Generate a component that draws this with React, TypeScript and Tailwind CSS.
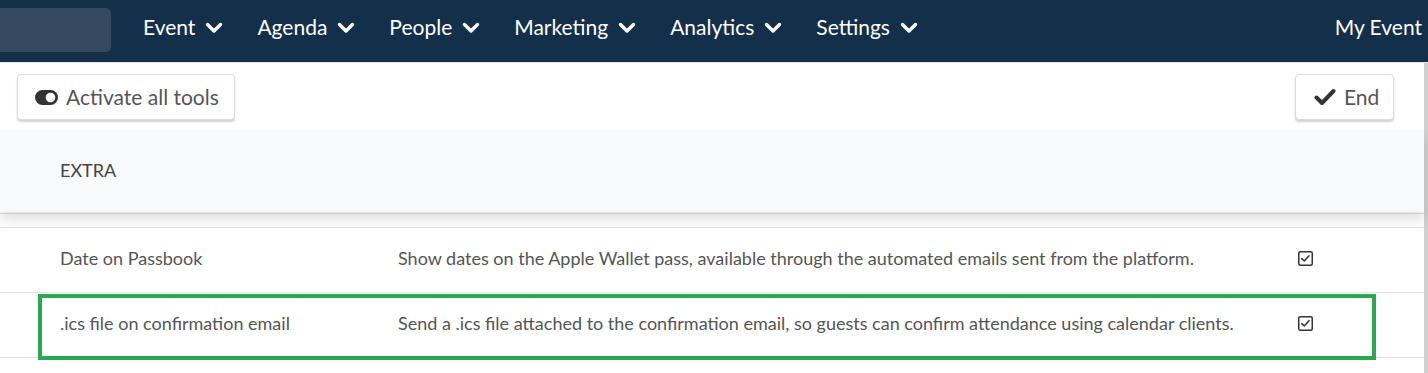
import React from "react";

const Chevron = () => (
  <svg width="18" height="12" viewBox="0 0 18 12" className="ml-[10px] mt-[1px]">
    <path d="M2.5 2.5 L9 9 L15.5 2.5" fill="none" stroke="white" strokeWidth="3.4" strokeLinecap="round" strokeLinejoin="round" />
  </svg>
);

const CheckBox = () => (
  <svg width="15" height="15" viewBox="0 0 15 15">
    <rect x="0.75" y="0.75" width="13.5" height="13.5" rx="1.5" fill="white" stroke="#333" strokeWidth="1.5" />
    <path d="M3.8 7.6 L6.3 10 L11 4.8" fill="none" stroke="#333" strokeWidth="1.6" strokeLinecap="round" strokeLinejoin="round" />
  </svg>
);

const navItems = ["Event", "Agenda", "People", "Marketing", "Analytics", "Settings"];

export default function App() {
  return (
    <div className="w-[1428px] h-[373px] overflow-hidden bg-white relative" style={{ fontFamily: "Lato, 'Open Sans', sans-serif" }}>
      {/* Nav */}
      <div className="h-[62px] bg-[#132f49] flex items-center">
        <div className="w-[111px] h-[44px] bg-[#34495f] rounded-r-[5px] mt-[-3px]" />
        <div className="flex items-center gap-[34px] ml-[32px] mt-[-8px]">
          {navItems.map((n) => (
            <div key={n} className="flex items-center text-white text-[21px]">
              <span>{n}</span>
              <Chevron />
            </div>
          ))}
        </div>
        <div className="ml-auto mr-[6px] mt-[-8px] text-white text-[21px]">My Event</div>
      </div>
      <div className="h-[1px] bg-[#e3e8ee]" />

      <div className="flex">
        <div className="flex-1">
          {/* Toolbar */}
          <div className="h-[67px] flex items-start justify-between pl-[17px] pr-[30px] pt-[11px]">
            <button className="h-[46px] w-[218px] pl-[17px] flex items-center gap-[8px] rounded-[4px] border border-[#dcdcdc] bg-white shadow-[0_2px_2px_rgba(0,0,0,0.18)] text-[#555] text-[21px]">
              <svg width="23" height="15" viewBox="0 0 23 15">
                <rect x="0" y="0" width="23" height="15" rx="7.5" fill="#333" />
                <circle cx="15.5" cy="7.5" r="4.8" fill="white" />
              </svg>
              <span>Activate all tools</span>
            </button>
            <button className="h-[46px] w-[99px] pl-[18px] flex items-center gap-[8px] rounded-[4px] border border-[#dcdcdc] bg-white shadow-[0_2px_2px_rgba(0,0,0,0.18)] text-[#555] text-[21px]">
              <svg width="22" height="18" viewBox="0 0 22 18">
                <path d="M2.5 9.5 L8 15 L19.5 3" fill="none" stroke="#333" strokeWidth="4" strokeLinecap="round" strokeLinejoin="round" />
              </svg>
              <span>End</span>
            </button>
          </div>

          {/* Section header */}
          <div className="h-[82px] bg-[#f8f9fb] flex items-center pl-[60px] pb-[2px] text-[18px] text-[#444] shadow-[0_8px_12px_rgba(0,0,0,0.12)] relative z-10">
            EXTRA
          </div>
          <div className="h-[1px] bg-[#e2e2e2] mt-[1px]" />
          <div className="h-[13px]" />
          <div className="h-[1px] bg-[#e2e2e2]" />

          {/* Rows */}
          <div className="h-[65px] flex items-center pb-[3px] text-[18px] text-[#555] border-b border-[#e2e2e2]">
            <div className="w-[398px] pl-[60px]">Date on Passbook</div>
            <div className="flex-1">Show dates on the Apple Wallet pass, available through the automated emails sent from the platform.</div>
            <div className="w-[127px] flex pl-[1px]"><CheckBox /></div>
          </div>
          <div className="h-[65px] flex items-center pb-[3px] text-[18px] text-[#555] border-b border-[#e2e2e2] relative">
            <div className="absolute left-[38px] top-[1px] w-[1338px] h-[66px] border-[4px] border-[#2aa84f] pointer-events-none" />
            <div className="w-[398px] pl-[60px]">.ics file on confirmation email</div>
            <div className="flex-1">Send a .ics file attached to the confirmation email, so guests can confirm attendance using calendar clients.</div>
            <div className="w-[127px] flex pl-[1px]"><CheckBox /></div>
          </div>
        </div>
        <div className="w-[4px] bg-[#d0d0d0] h-[320px]" />
      </div>
    </div>
  );
}
